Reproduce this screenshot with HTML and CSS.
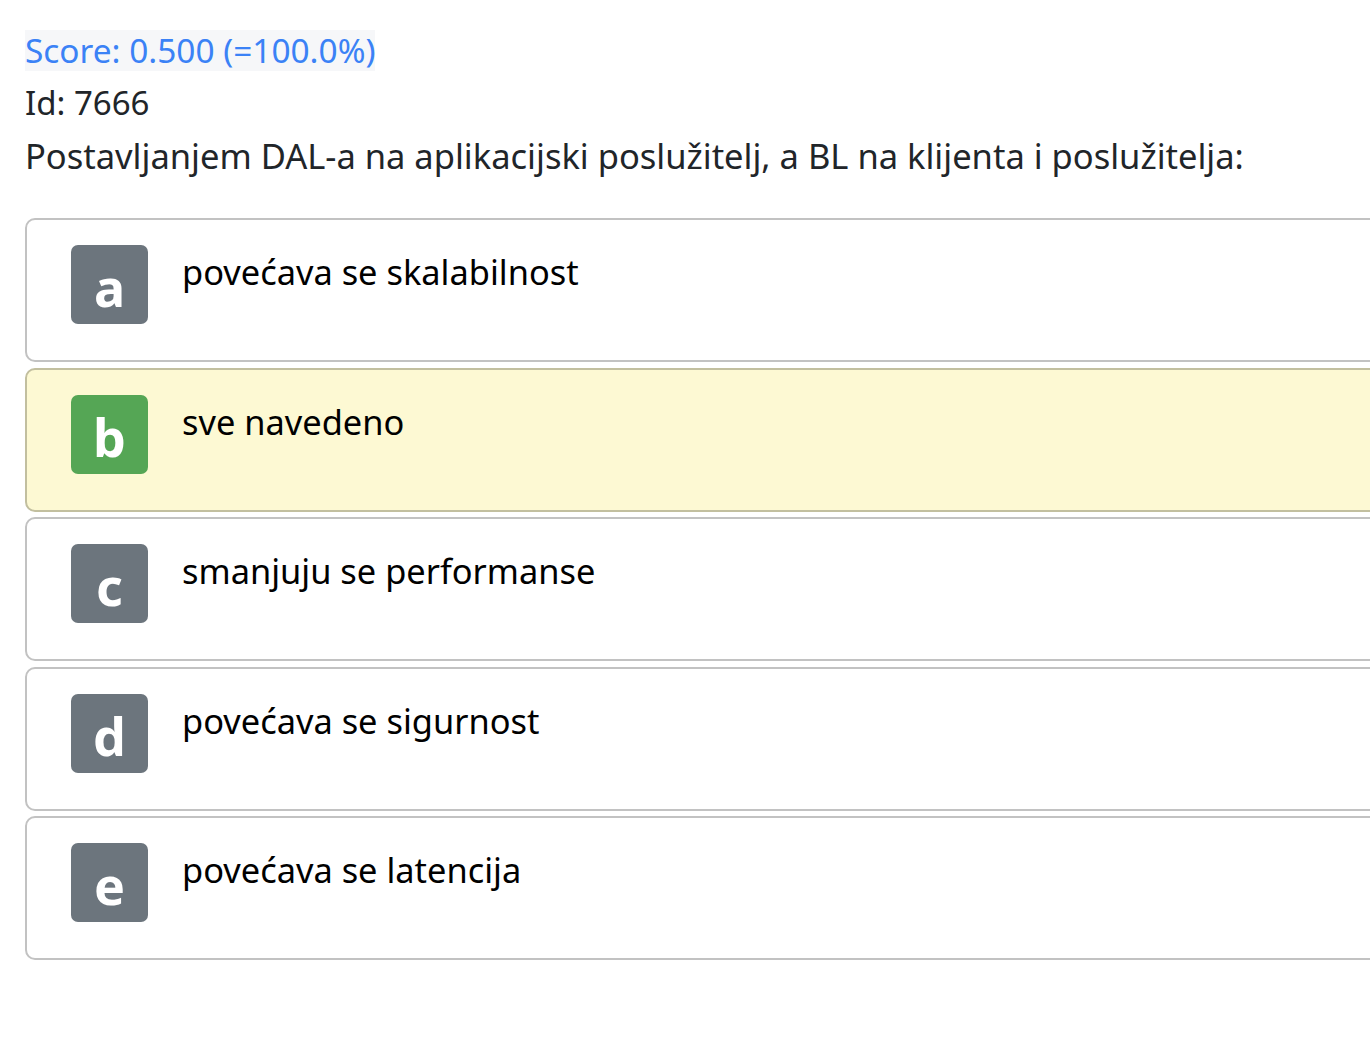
FILE: index.html
```html
<!DOCTYPE html>
<html lang="hr">
<head>
<meta charset="utf-8">
<title>Pitanje 7666</title>
<link rel="stylesheet" href="styles.css">
</head>
<body>
<div class="page">
  <div class="meta">
    <div class="score-line"><span class="score">Score: 0.500 (=100.0%)</span></div>
    <div class="id">Id: 7666</div>
    <div class="question">Postavljanjem DAL-a na aplikacijski poslužitelj, a BL na klijenta i poslužitelja:</div>
  </div>
  <div class="answers">
    <div class="answer">
      <span class="badge">a</span>
      <span class="answer-text">povećava se skalabilnost</span>
    </div>
    <div class="answer answer-selected">
      <span class="badge badge-correct">b</span>
      <span class="answer-text">sve navedeno</span>
    </div>
    <div class="answer">
      <span class="badge">c</span>
      <span class="answer-text">smanjuju se performanse</span>
    </div>
    <div class="answer">
      <span class="badge">d</span>
      <span class="answer-text">povećava se sigurnost</span>
    </div>
    <div class="answer">
      <span class="badge">e</span>
      <span class="answer-text">povećava se latencija</span>
    </div>
  </div>
</div>
</body>
</html>
```

FILE: styles.css
```css
html, body {
  margin: 0;
  padding: 0;
  background: #ffffff;
  overflow: hidden;
}

.page {
  padding: 29px 0 0 25px;
  font-family: "Noto Sans", "Open Sans", sans-serif;
  color: #212529;
}

.meta {
  font-size: 34.5px;
  line-height: 53px;
}

.score-line {
  line-height: 41px;
  margin-bottom: 5px;
}

.score {
  display: inline-block;
  background: #f6f7f9;
  color: #3b82f6;
  font-size: 33.4px;
  line-height: 41px;
}

.id {
  font-size: 33px;
  line-height: 53px;
}

.question {
  line-height: 53px;
}

.answers {
  margin-top: 36px;
  width: 1400px;
  display: flex;
  flex-direction: column;
  gap: 5.5px;
}

.answer {
  box-sizing: border-box;
  height: 144px;
  border: 2px solid #c2c2c2;
  border-radius: 10px;
  background: #ffffff;
  padding: 25px 0 0 44px;
  display: flex;
  align-items: flex-start;
  gap: 34px;
}

.answer-selected {
  background: #fdf9d3;
  border-color: #c2bf9f;
}

.badge {
  flex: none;
  box-sizing: border-box;
  width: 77px;
  height: 79px;
  padding-top: 4px;
  border-radius: 7px;
  background: #6c757d;
  color: #ffffff;
  font-weight: 700;
  font-size: 52px;
  line-height: 75px;
  text-align: center;
}

.badge-correct {
  background: #55a655;
}

.answer-text {
  color: #000000;
  font-size: 34.4px;
  line-height: 54px;
}
```
